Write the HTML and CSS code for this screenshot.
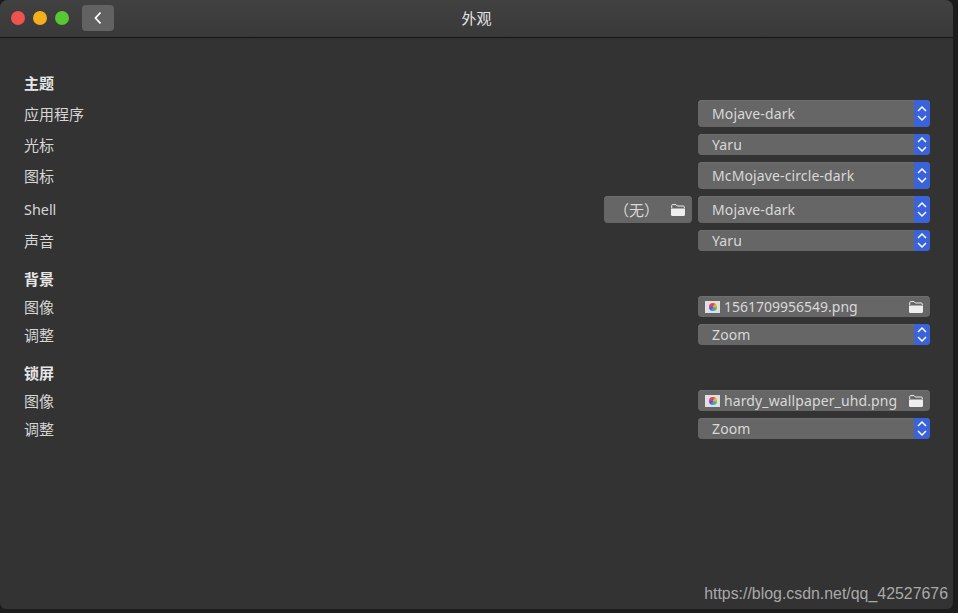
FILE: index.html
```html
<!DOCTYPE html>
<html lang="zh">
<head>
<meta charset="utf-8">
<title>外观</title>
<link rel="stylesheet" href="styles.css">
</head>
<body>
<svg class="defs" width="0" height="0" aria-hidden="true">
  <defs>
    <symbol id="updown" viewBox="0 0 16 21">
      <path d="M4 8 8 4l4 4M4 13l4 4 4-4" fill="none" stroke="#fff" stroke-width="1.5"/>
    </symbol>
    <symbol id="folder" viewBox="0 0 14 12">
      <path d="M.7 4V1.6C.7 1 1.1.6 1.7.6h3.4L6.3 2h6c.6 0 1 .4 1 1v1" fill="none" stroke="#eee" stroke-width="1"/>
      <path d="M0 4.600h14v6.200c0 .7-.5 1.200-1.200 1.200H1.200C.5 12 0 11.500 0 10.800z" fill="#eee"/>
    </symbol>
  </defs>
</svg>
<div class="window">
  <header class="titlebar">
    <div class="lights">
      <span class="light red"></span>
      <span class="light amber"></span>
      <span class="light green"></span>
    </div>
    <button class="back" aria-label="返回">
      <svg width="10" height="16" viewBox="0 0 10 16"><path d="M7.500 2.500 2.500 8l5 5.500" fill="none" stroke="#fff" stroke-width="1.800"/></svg>
    </button>
    <h1 class="title">外观</h1>
  </header>
  <main class="content">
    <section class="section">
      <h2 class="heading">主题</h2>
      <div class="row"><span class="label">应用程序</span><div class="select tall"><span class="value">Mojave-dark</span><span class="spin"><svg width="16" height="21"><use href="#updown"/></svg></span></div></div>
      <div class="row"><span class="label">光标</span><div class="select"><span class="value">Yaru</span><span class="spin"><svg width="16" height="21"><use href="#updown"/></svg></span></div></div>
      <div class="row"><span class="label">图标</span><div class="select tall"><span class="value">McMojave-circle-dark</span><span class="spin"><svg width="16" height="21"><use href="#updown"/></svg></span></div></div>
      <div class="row"><span class="label latin">Shell</span>
        <div class="none-btn"><span class="none-text">（无）</span><svg class="folder" width="14" height="12"><use href="#folder"/></svg></div>
        <div class="select tall"><span class="value">Mojave-dark</span><span class="spin"><svg width="16" height="21"><use href="#updown"/></svg></span></div></div>
      <div class="row"><span class="label">声音</span><div class="select"><span class="value">Yaru</span><span class="spin"><svg width="16" height="21"><use href="#updown"/></svg></span></div></div>
    </section>
    <section class="section">
      <h2 class="heading">背景</h2>
      <div class="row"><span class="label">图像</span><div class="select file"><span class="thumb"><span class="wheel"></span></span><span class="file-name digits">1561709956549.png</span><svg class="folder" width="14" height="12"><use href="#folder"/></svg></div></div>
      <div class="row"><span class="label">调整</span><div class="select"><span class="value">Zoom</span><span class="spin"><svg width="16" height="21"><use href="#updown"/></svg></span></div></div>
    </section>
    <section class="section">
      <h2 class="heading">锁屏</h2>
      <div class="row"><span class="label">图像</span><div class="select file"><span class="thumb"><span class="wheel"></span></span><span class="file-name">hardy_wallpaper_uhd.png</span><svg class="folder" width="14" height="12"><use href="#folder"/></svg></div></div>
      <div class="row"><span class="label">调整</span><div class="select"><span class="value">Zoom</span><span class="spin"><svg width="16" height="21"><use href="#updown"/></svg></span></div></div>
    </section>
  </main>
  <div class="watermark">https://blog.csdn.net/qq_42527676</div>
</div>
</body>
</html>
```
FILE: styles.css
```css
* { box-sizing: border-box; }
html, body { margin: 0; height: 100%; }
body {
  background: #1c1c1c;
  font-family: "Noto Sans", "Noto Sans CJK SC", sans-serif;
  font-size: 14px;
  color: #d8d8d8;
  overflow: hidden;
}
.defs { position: absolute; }
.window {
  position: relative;
  width: 953px;
  height: 609px;
  background: #333;
  border-radius: 8px 8px 6px 6px;
  overflow: hidden;
}
.titlebar {
  position: relative;
  height: 38px;
  display: flex;
  align-items: center;
  padding: 0 0 1px 11px;
  background: linear-gradient(#414141, #393939);
  border-bottom: 1px solid #141414;
}
.lights { display: flex; gap: 8px; }
.light { width: 14px; height: 14px; border-radius: 50%; }
.red { background: #ee5350; }
.amber { background: #f5ae1c; }
.green { background: #55c832; }
.back {
  margin-left: 13px;
  width: 32px;
  height: 26px;
  padding: 0;
  border: 0;
  border-radius: 4px;
  background: #626262;
  display: flex;
  align-items: center;
  justify-content: center;
}
.title {
  position: absolute;
  left: 0;
  right: 0;
  top: 9px;
  margin: 0;
  text-align: center;
  font-size: 15px;
  line-height: 18px;
  font-weight: 400;
  color: #e4e4e4;
}
.content { padding: 37px 23px 0 24px; }
.section { margin-bottom: 20px; }
.heading {
  margin: 0 0 8px;
  height: 17px;
  font-size: 15px;
  line-height: 17px;
  font-weight: 700;
  color: #e6e6e6;
}
.row {
  display: flex;
  align-items: center;
  gap: 6px;
  margin-top: 7px;
}
.heading + .row { margin-top: 0; }
.label { flex: 1; font-size: 15px; line-height: 19px; padding-top: 1px; color: #d6d6d6; }
.latin { font-size: 14.4px; padding-top: 0; }
.select {
  width: 232px;
  height: 21px;
  display: flex;
  align-items: stretch;
  background: #666;
  border-radius: 4px;
  overflow: hidden;
  box-shadow: inset 0 1px 0 #6e6e6e;
}
.tall { height: 27px; }
.value {
  flex: 1;
  padding-left: 14px;
  align-self: center;
  line-height: 18px;
  letter-spacing: .12px;
  color: #d8d8d8;
}
.spin {
  width: 16px;
  background: #3a63d9;
  display: flex;
  align-items: center;
  justify-content: center;
}
.file { align-items: center; padding: 0 7px; }
.thumb {
  flex: none;
  width: 15px;
  height: 12px;
  display: flex;
  align-items: center;
  justify-content: center;
  background: #e0e0e0;
}
.wheel {
  width: 8px;
  height: 8px;
  border-radius: 50%;
  filter: blur(.6px);
  background: conic-gradient(#e8403a, #e9c62c, #4cc04a, #3fa0e0, #6a45d8, #d83ab0, #e8403a);
}
.file-name { flex: 1; padding-left: 4px; line-height: 18px; letter-spacing: .12px; color: #d8d8d8; white-space: nowrap; }
.digits { letter-spacing: 0; }
.folder { flex: none; }
.none-btn {
  width: 88px;
  height: 27px;
  display: flex;
  align-items: center;
  padding: 0 7px 0 10px;
  background: #666;
  border-radius: 4px;
  box-shadow: inset 0 1px 0 #6e6e6e;
}
.none-text { flex: 1; font-size: 15px; color: #d8d8d8; }
.watermark {
  position: absolute;
  right: 5px;
  bottom: 6px;
  font-family: "Liberation Sans", sans-serif;
  font-size: 15.9px;
  line-height: 18px;
  color: #a9a9a9;
}
```
